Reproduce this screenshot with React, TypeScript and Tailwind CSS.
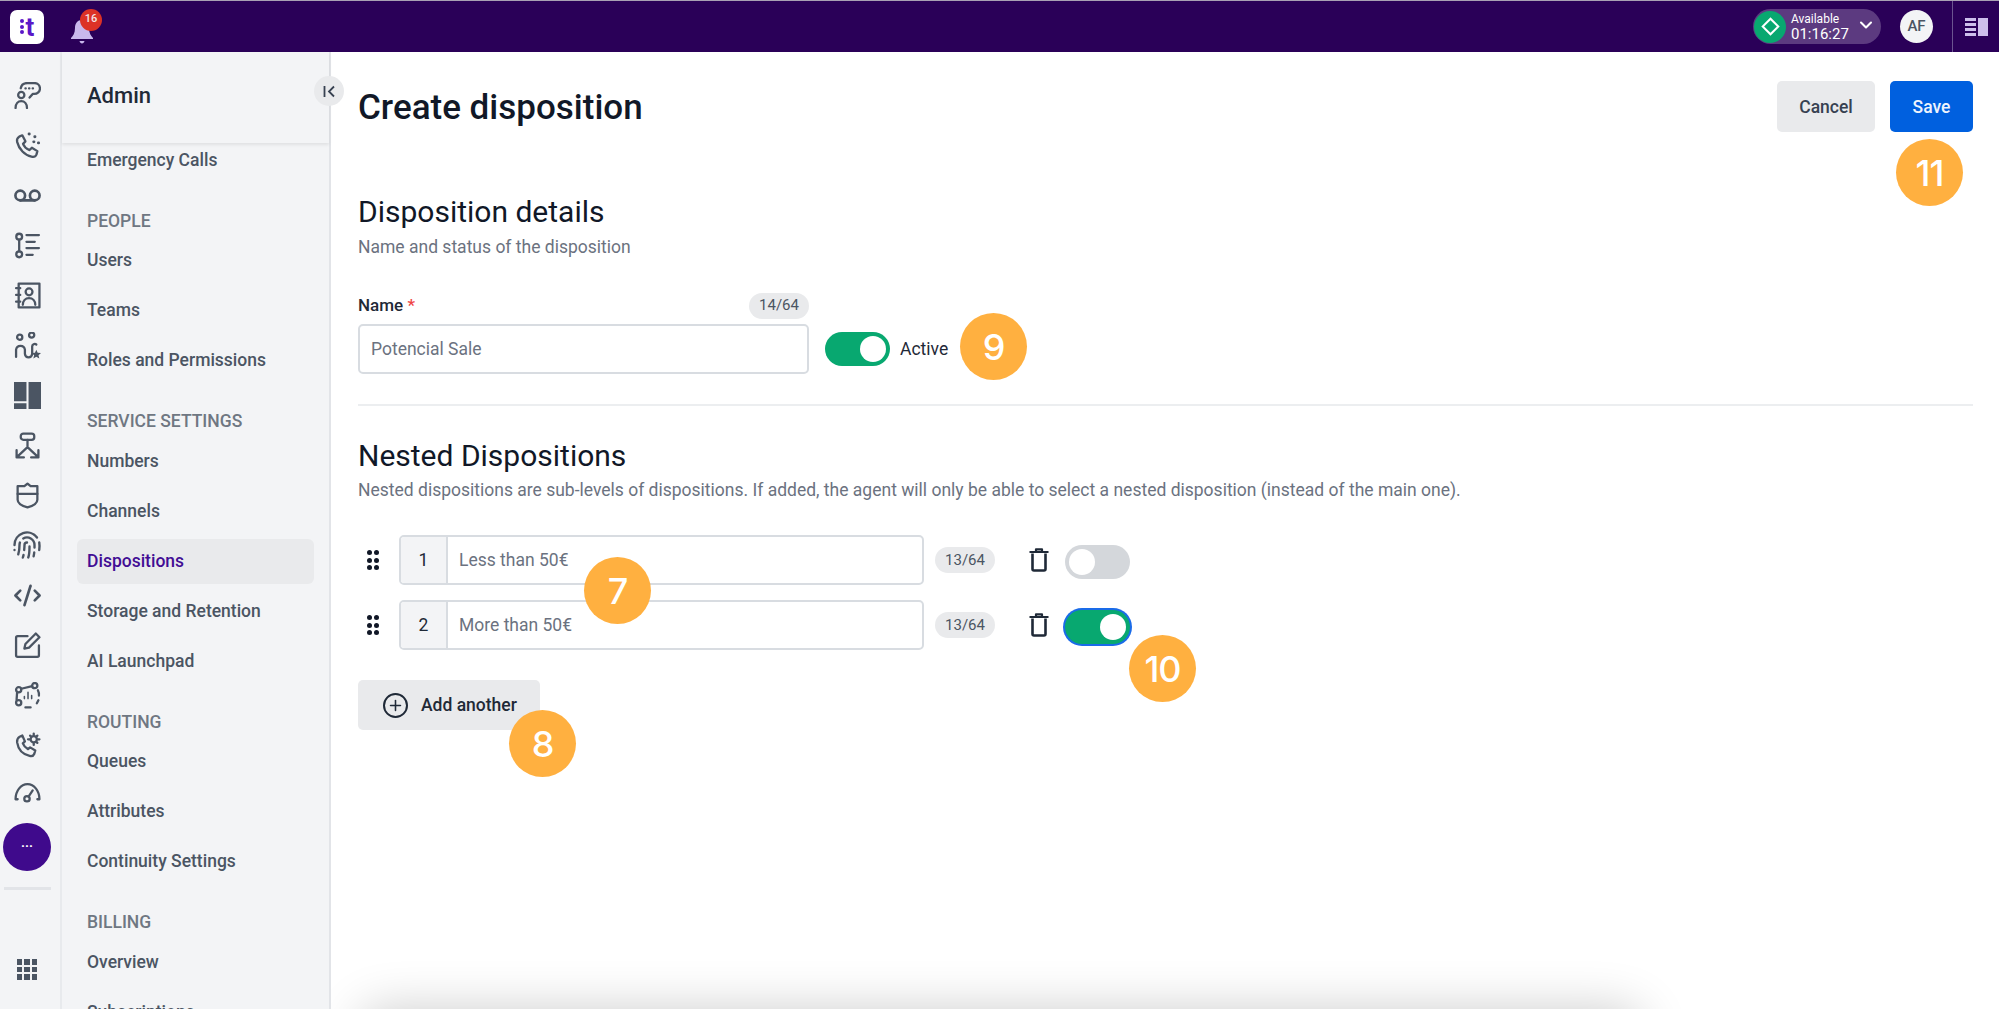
import React from "react";
import { Voicemail, CodeXml, Fingerprint, ChevronDown, Plus } from "lucide-react";

const S = { fill: "none", stroke: "#4b5563", strokeWidth: 2.2, strokeLinecap: "round" as const, strokeLinejoin: "round" as const };

function Svg({ children }: { children: React.ReactNode }) {
  return (
    <svg width="27" height="27" viewBox="0 0 26 26" {...S}>
      {children}
    </svg>
  );
}

const railIcons: React.ReactNode[] = [
  <Svg key="a">
    <circle cx="7" cy="12.500" r="3" />
    <path d="M1.500 25c0-4 2.400-6.500 5.500-6.500s5.500 2.500 5.500 6.500" />
    <path d="M6.500 6C7 3 9.500 1 13 1h6.500c3 0 5.500 2.200 5.500 5.200s-2.500 5.300-5.500 5.300H18l-3 3.500" />
    <path d="M11 6.200h.3M14.500 6.200h.3M18 6.200h.3" />
  </Svg>,
  <Svg key="b">
    <path d="M5 4.500 8 3.200 11 9l-2.300 2.400c1 2.600 3 4.600 6 6l2.500-2.200 5.300 3.200-.9 3.400c-.7 1.700-2.600 2.500-4.800 2C10.500 22.500 4.700 16.500 3 9.500 2.600 7.500 3.300 5.500 5 4.500Z" />
    <path d="M14.500 2h.2M20 4.500h.2M23.500 10.500h.2M19 9.500h.2" strokeWidth="2.800" />
  </Svg>,
  <Voicemail key="c" size={29} color="#4b5563" strokeWidth={2.2} />,
  <Svg key="d">
    <circle cx="5" cy="4.500" r="2.800" />
    <circle cx="5" cy="21.500" r="2.800" />
    <path d="M5 7.300v11.400M12 3h12M12 9.500h8M12 15.500h12M12 22h6" />
  </Svg>,
  <Svg key="e">
    <path d="M4.500 1.500H24.500V24.500H4.500Z" />
    <circle cx="14.500" cy="9.500" r="3.300" />
    <path d="M8.500 22c0-4 2.500-6.500 6-6.500s6 2.500 6 6.500M2 6h4M2 12.500h4M2 19h4" />
  </Svg>,
  <Svg key="f">
    <circle cx="5.500" cy="5" r="2.500" />
    <circle cx="17" cy="3" r="2.500" />
    <path d="M2 24v-7a4.300 4.300 0 0 1 8.500 0v4a3.500 3.500 0 0 0 7 0v-7a2.500 2.500 0 0 1 4-2" />
    <path d="m21.500 17 1.300 3 3.200.3-2.400 2 .8 3.200-2.900-1.700-2.900 1.700.8-3.200-2.400-2 3.200-.3Z" fill="#4b5563" strokeWidth="0" />
  </Svg>,
  <svg key="g" width="27" height="27" viewBox="0 0 26 26" fill="#4b5563">
    <path d="M0 0h12v18.500H0ZM0 20.500h12V26H0ZM14 0h12v26H14Z" />
  </svg>,
  <Svg key="h">
    <rect x="6.500" y="1.500" width="13" height="6" rx="2.500" />
    <path d="M13 7.500v7L3 24M13 14.500 23 24M2.500 17.500V24.500H9.500M23.500 17.500V24.500H16.500" />
  </Svg>,
  <Svg key="i">
    <path d="M13 1.500 16 4h6.500v13c0 3.500-4.500 6-9.500 7.500C8 23 3.500 20.500 3.500 17V4H10Z" />
    <path d="M3.500 11.500h19" />
  </Svg>,
  <Fingerprint key="j" size={30} color="#4b5563" strokeWidth={1.9} />,
  <CodeXml key="k" size={29} color="#4b5563" strokeWidth={2.2} />,
  <Svg key="l">
    <path d="M13 4H3.500A1.500 1.500 0 0 0 2 5.500v17A1.500 1.500 0 0 0 3.500 24h19a1.500 1.500 0 0 0 1.500-1.500V13" />
    <path d="M21 1.500 24.500 5 14.500 15l-4.500 1 1-4.500Z" />
  </Svg>,
  <Svg key="m">
    <circle cx="4.500" cy="7.500" r="2.500" />
    <circle cx="4.500" cy="20" r="2.500" />
    <circle cx="20" cy="3.500" r="2.500" />
    <path d="M7 6.500 17.500 4M3 10l-.5 7M23 8c1 2 1.300 3 1 5M23.500 17.500l-1.500 3M11 24.500h5" />
    <path d="M10 16v-2M13.500 16v-6M17 16v-3" strokeWidth="1.500" />
  </Svg>,
  <Svg key="n">
    <path d="M5.500 4.500 8 3.300 10.500 9l-2 2c1 2.600 2.600 4.300 5 5.500l2-1.700 5 3-1 3.400c-.7 1.600-2.500 2.300-4.500 1.800C8.500 21.500 4 16.500 3 10c-.3-2.300.7-4.300 2.500-5.500Z" />
    <circle cx="19" cy="7" r="3" />
    <path d="M19 1.500v1.500M19 11v1.500M13.500 7H15M23 7h1.500M15.500 3.500l1 1M21.500 9.500l1 1M22.500 3.500l-1 1" />
  </Svg>,
  <div key="o" className="mb-[5px]">
    <Svg>
      <path d="M1.500 19.500C1.500 11.500 6.500 5 13 5s11.500 6.500 11.500 14.500M1.500 19.500h2M24.500 19.500h-2" />
      <circle cx="12.500" cy="19" r="2.600" />
      <path d="m14 17 4-6" />
    </Svg>
  </div>,
];

type NavRow = { t: "s" | "i"; l: string; a?: boolean };
const nav: NavRow[] = [
  { t: "i", l: "Emergency Calls" },
  { t: "s", l: "PEOPLE" },
  { t: "i", l: "Users" },
  { t: "i", l: "Teams" },
  { t: "i", l: "Roles and Permissions" },
  { t: "s", l: "SERVICE SETTINGS" },
  { t: "i", l: "Numbers" },
  { t: "i", l: "Channels" },
  { t: "i", l: "Dispositions", a: true },
  { t: "i", l: "Storage and Retention" },
  { t: "i", l: "AI Launchpad" },
  { t: "s", l: "ROUTING" },
  { t: "i", l: "Queues" },
  { t: "i", l: "Attributes" },
  { t: "i", l: "Continuity Settings" },
  { t: "s", l: "BILLING" },
  { t: "i", l: "Overview" },
  { t: "i", l: "Subscriptions" },
];

function Toggle({ on, focus }: { on: boolean; focus?: boolean }) {
  return (
    <div
      className={`flex h-[34px] w-[65px] shrink-0 items-center rounded-full p-[4px] ${on ? "justify-end bg-[#08a870]" : "justify-start bg-[#d4d7db]"} ${focus ? "ring-2 ring-[#1a6be8]" : ""}`}
    >
      <div className="h-[26px] w-[26px] rounded-full bg-white" />
    </div>
  );
}

function Pill({ children }: { children: React.ReactNode }) {
  return (
    <span className="flex h-[26px] w-[60px] shrink-0 items-center justify-center rounded-full bg-[#e9eaec] text-[15px] text-[#4b5563]">
      {children}
    </span>
  );
}

function Badge({ n, className }: { n: string; className: string }) {
  return (
    <div
      className={`absolute flex h-[67px] w-[67px] items-center justify-center rounded-full bg-[#ffb040] font-[Inter,sans-serif] text-[36px] font-medium tracking-[-1px] text-white ${className}`}
    >
      {n}
    </div>
  );
}

function Trash() {
  return (
    <svg width="20" height="24" viewBox="0 0 20 24" fill="none" stroke="#1f2937" strokeWidth="2.600" strokeLinejoin="round" className="ml-[34px] mr-[16px] shrink-0">
      <path d="M3.500 5.500V21a1.500 1.500 0 0 0 1.500 1.500h10a1.500 1.500 0 0 0 1.500-1.500V5.500" />
      <path d="M0.500 4h19M7 3V1.300h6V3" strokeWidth="2.200" />
    </svg>
  );
}

function Drag() {
  return (
    <div className="grid h-[20px] w-[13px] shrink-0 grid-cols-2 content-between justify-between">
      {[0, 1, 2, 3, 4, 5].map((i) => (
        <span key={i} className="h-[5px] w-[5px] rounded-full bg-[#111827]" />
      ))}
    </div>
  );
}

function Row({ n, text, on, focus, mt }: { n: string; text: string; on: boolean; focus?: boolean; mt: string }) {
  return (
    <div className={`flex h-[50px] items-center ${mt}`}>
      <div className="ml-[9px] mr-[19px]">
        <Drag />
      </div>
      <div className="flex h-full w-[525px] shrink-0 overflow-hidden rounded-[5px] border-2 border-[#d8dce1]">
        <div className="flex w-[47px] items-center justify-center border-r-2 border-[#d8dce1] bg-[#f3f4f6] text-[17.500px] text-[#1f2937]">{n}</div>
        <div className="flex items-center pl-[11px] text-[17.500px] text-[#6b7280]">{text}</div>
      </div>
      <div className="ml-[11px]">
        <Pill>13/64</Pill>
      </div>
      <Trash />
      <div className="mt-[4px]">
        <Toggle on={on} focus={focus} />
      </div>
    </div>
  );
}

export default function App() {
  return (
    <div className="flex h-[1009px] w-[1999px] flex-col overflow-hidden bg-white font-[Roboto,sans-serif]">
      <header className="flex h-[52px] shrink-0 items-center border-t border-[#a9a0b4] bg-[#2a0058]">
        <div className="ml-[10px] flex h-[34px] w-[34px] items-center justify-center gap-[2px] rounded-[7px] bg-white text-[#5a17c8]">
          <span className="flex h-[15px] flex-col justify-between">
            <span className="h-[4px] w-[4px] rounded-full bg-[#5a17c8]" />
            <span className="h-[4px] w-[4px] rounded-full bg-[#5a17c8]" />
            <span className="h-[4px] w-[4px] rounded-full bg-[#5a17c8]" />
          </span>
          <span className="text-[26px] font-bold leading-none">t</span>
        </div>
        <div className="relative ml-[27px] h-[34px] w-[34px]">
          <svg width="24" height="26" viewBox="0 0 24 26" fill="#c9b8ec" className="absolute left-[-1px] top-[9px]">
            <path d="M12 1c-4.500 0-7 3.500-7 8 0 5-2 8-4 10v1h22v-1c-2-2-4-5-4-10 0-4.500-2.500-8-7-8ZM9.500 22c.3 1.500 1.300 2.500 2.500 2.500s2.200-1 2.500-2.500Z" />
          </svg>
          <span className="absolute left-[9px] top-[-1px] flex h-[22px] w-[22px] items-center justify-center rounded-full bg-[#dc3226] text-[11px] font-medium text-[#f5e6e6]">16</span>
        </div>
        <div className="ml-auto flex h-[35px] w-[128px] items-center rounded-full bg-[#5c3a80]">
          <div className="ml-[1px] flex h-[32px] w-[32px] items-center justify-center rounded-full bg-[#08a870]">
            <div className="h-[13px] w-[13px] rotate-45 border-[2.500px] border-white" />
          </div>
          <div className="ml-[5px] flex flex-col text-white">
            <span className="text-[12px] leading-[14px]">Available</span>
            <span className="text-[15px] leading-[16px]">01:16:27</span>
          </div>
          <ChevronDown size={20} strokeWidth={2.500} color="#ffffff" className="ml-[7px] mb-[3px]" />
        </div>
        <div className="ml-[19px] flex h-[33px] w-[33px] items-center justify-center rounded-full bg-[#f3f4f6] text-[15px] font-medium text-[#4b5563]">AF</div>
        <div className="ml-[19px] h-full w-px bg-[#6b5490]" />
        <div className="ml-[12px] mr-[11px] flex h-[18px] w-[23px] justify-between">
          <div className="flex w-[11px] flex-col justify-between">
            <span className="h-[3px] bg-[#cdbfeb]" />
            <span className="h-[3px] bg-[#cdbfeb]" />
            <span className="h-[3px] bg-[#cdbfeb]" />
            <span className="h-[3px] bg-[#cdbfeb]" />
          </div>
          <div className="w-[10px] bg-[#cdbfeb]" />
        </div>
      </header>

      <div className="flex min-h-0 flex-1">
        <aside className="flex w-[62px] shrink-0 flex-col items-center border-r-2 border-[#e8eaed] bg-[#f3f4f6] pr-[6px] pt-[18px]">
          {railIcons.map((ic, i) => (
            <div key={i} className="flex h-[50px] w-full shrink-0 items-center justify-center">
              {ic}
            </div>
          ))}
          <div className="mt-[3px] flex h-[48px] w-[48px] shrink-0 items-center justify-center rounded-full bg-[#3f0a8c] pb-[4px] text-[13px] font-bold leading-none text-white">
            ···
          </div>
          <div className="mt-[16px] h-[3px] w-[47px] shrink-0 bg-[#e2e4e8]" />
          <div className="mt-[69px] grid h-[21px] w-[21px] shrink-0 grid-cols-3 gap-[2px]">
            {[0, 1, 2, 3, 4, 5, 6, 7, 8].map((i) => (
              <span key={i} className="bg-[#4b5563]" />
            ))}
          </div>
        </aside>

        <nav className="relative flex w-[269px] shrink-0 flex-col border-r-2 border-[#e2e4e8] bg-[#f3f4f6]">
          <div className="z-10 flex h-[91px] shrink-0 items-start bg-[#f3f4f6] pl-[25px] pt-[30px] text-[22px] font-medium leading-[28px] text-[#1f2937] shadow-[0_2px_3px_rgba(0,0,0,0.08)]">
            Admin
          </div>
          <div className="absolute right-[-15px] top-[24px] z-20 flex h-[30px] w-[30px] items-center justify-center rounded-full bg-[#e9eaec] text-[#374151]">
            <svg width="13" height="13" viewBox="0 0 13 13" fill="none" stroke="#374151" strokeWidth="1.800">
              <path d="M1.500 1v11M11 1.500 6 6.500l5 5" />
            </svg>
          </div>
          <div className="-mt-[8px] flex flex-col">
            {nav.map((r) =>
              r.t === "s" ? (
                <div key={r.l} className="flex h-[50.500px] shrink-0 items-end pb-[4px] pl-[25px] text-[17.500px] font-medium leading-[22px] text-[#6f7782]">
                  {r.l}
                </div>
              ) : (
                <div key={r.l} className="flex h-[50px] shrink-0 items-center px-[15px]">
                  <div className={`flex h-[45px] w-full items-center rounded-[6px] pl-[10px] text-[17.500px] font-medium ${r.a ? "bg-[#e9eaec] text-[#420d94]" : "text-[#4b5563]"}`}>
                    {r.l}
                  </div>
                </div>
              ),
            )}
          </div>
        </nav>

        <main className="relative min-w-0 flex-1 overflow-hidden pl-[27px] pr-[26px] pt-[29px]">
          <div className="flex h-[51px] items-center">
            <h1 className="mt-[3px] text-[35px] font-medium text-[#111827]">Create disposition</h1>
            <button className="ml-auto h-full w-[98px] rounded-[5px] bg-[#e9eaec] pt-[2px] text-[17.500px] font-medium text-[#374151]">Cancel</button>
            <button className="ml-[15px] h-full w-[83px] rounded-[5px] bg-[#0060df] pt-[2px] text-[17.500px] font-medium text-[#eef4fd]">Save</button>
          </div>

          <h2 className="mt-[62px] text-[30px] leading-[36px] text-[#111827]">Disposition details</h2>
          <p className="mt-[6px] text-[17.500px] leading-[22px] text-[#6b7280]">Name and status of the disposition</p>

          <div className="mt-[35px] flex h-[25px] w-[451px] items-center justify-between">
            <span className="text-[17px] font-medium text-[#1f2937]">
              Name <span className="text-[#ef4444]">*</span>
            </span>
            <Pill>14/64</Pill>
          </div>
          <div className="mt-[6px] flex items-center">
            <div className="flex h-[50px] w-[451px] items-center rounded-[5px] border-2 border-[#d8dce1] pl-[11px] text-[17.500px] text-[#6b7280]">Potencial Sale</div>
            <div className="ml-[16px]">
              <Toggle on />
            </div>
            <span className="ml-[10px] text-[17.500px] text-[#1f2937]">Active</span>
          </div>

          <div className="mt-[30px] h-[2px] bg-[#eceef0]" />

          <h2 className="mt-[32px] text-[30px] leading-[36px] text-[#111827]">Nested Dispositions</h2>
          <p className="mt-[5px] text-[17.500px] leading-[22px] text-[#6b7280]">
            Nested dispositions are sub-levels of dispositions. If added, the agent will only be able to select a nested disposition (instead of the main one).
          </p>

          <Row n="1" text="Less than 50€" on={false} mt="mt-[34px]" />
          <Row n="2" text="More than 50€" on focus mt="mt-[15px]" />

          <button className="mt-[30px] flex h-[50px] w-[182px] items-center rounded-[5px] bg-[#e9eaec] pl-[25px] text-[17.500px] font-medium text-[#1f2937]">
            <span className="flex h-[25px] w-[25px] items-center justify-center rounded-full border-2 border-[#1f2937]">
              <Plus size={17} strokeWidth={2.200} color="#1f2937" />
            </span>
            <span className="ml-[13px]">Add another</span>
          </button>

          <Badge n="11" className="left-[1565px] top-[87px]" />
          <Badge n="9" className="left-[629px] top-[261px]" />
          <Badge n="7" className="left-[253px] top-[505px]" />
          <Badge n="10" className="left-[798px] top-[583px]" />
          <Badge n="8" className="left-[178px] top-[658px]" />

          <div className="absolute left-[30px] top-[957px] h-[80px] w-[1280px] rounded-[20px] bg-white shadow-[0_0_50px_rgba(0,0,0,0.2)]" />
        </main>
      </div>
    </div>
  );
}
